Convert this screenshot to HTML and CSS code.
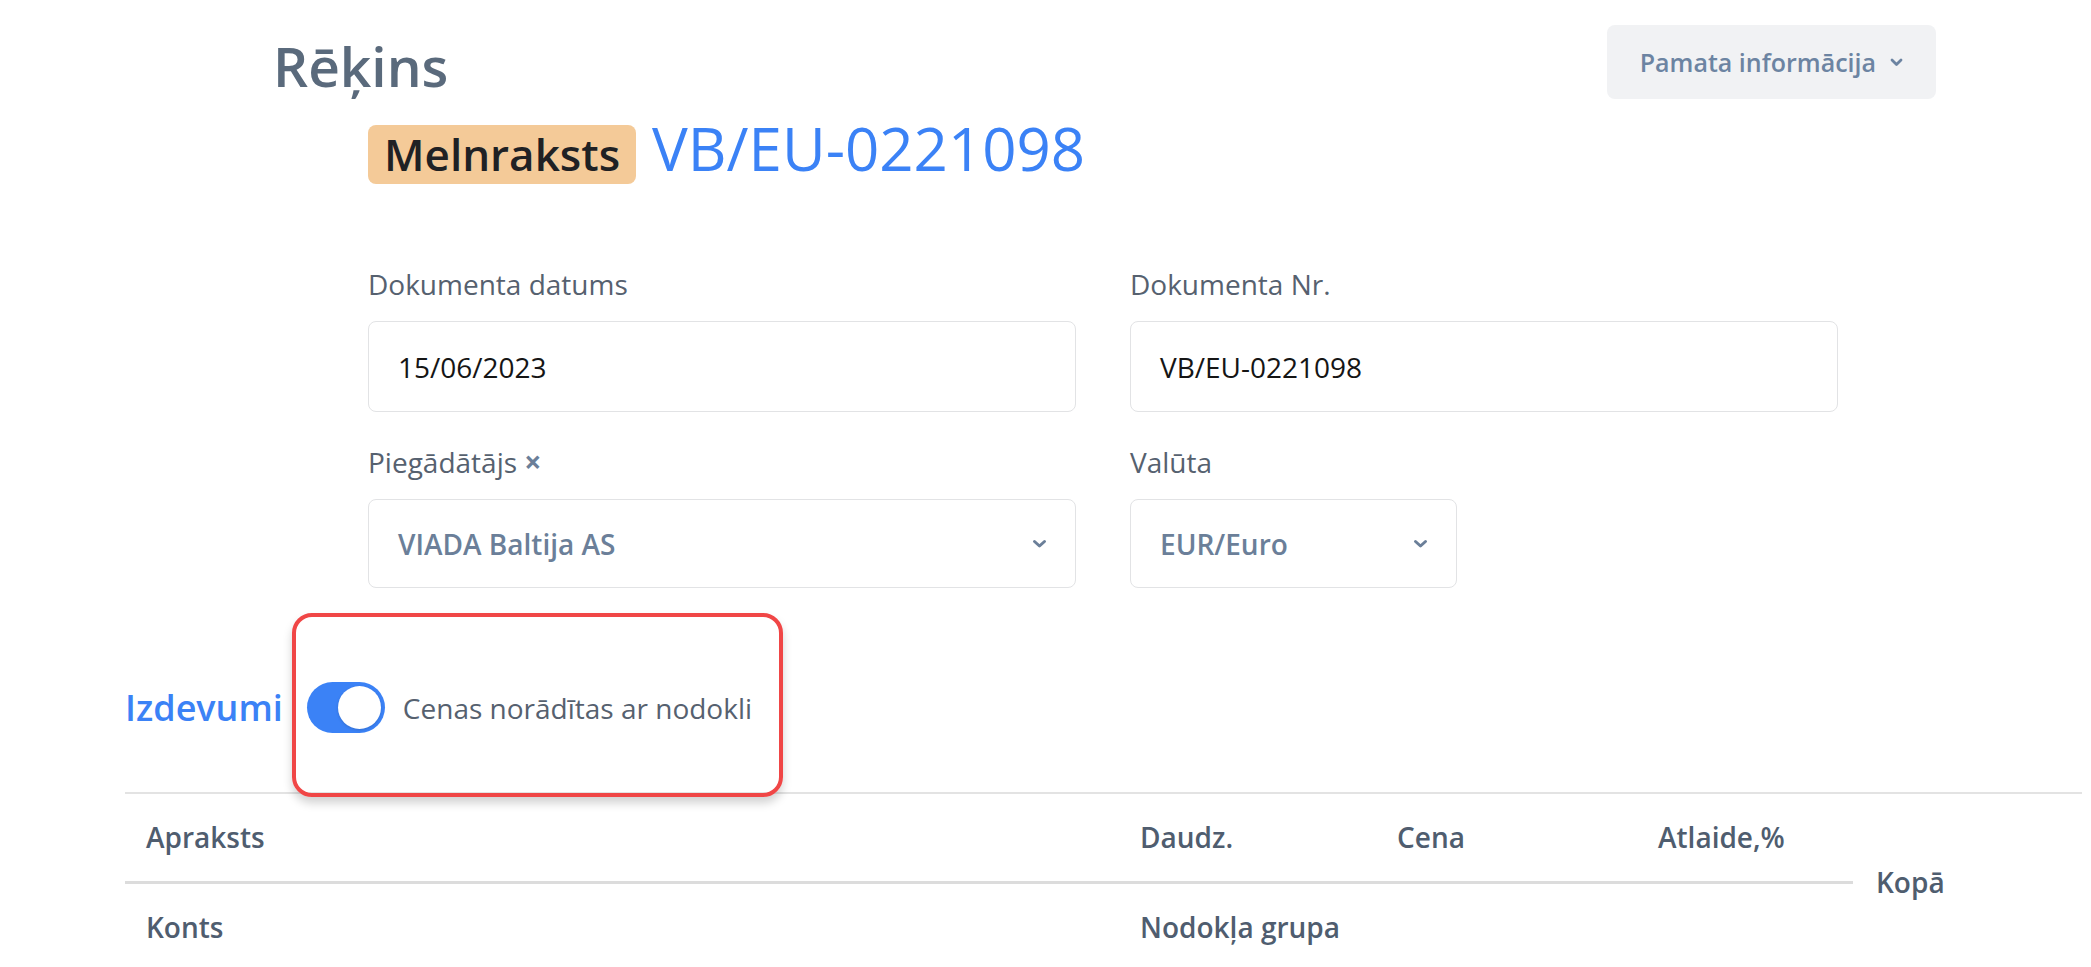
FILE: index.html
```html
<!DOCTYPE html>
<html lang="lv">
<head>
<meta charset="utf-8">
<title>Rēķins</title>
<link rel="stylesheet" href="styles.css">
</head>
<body>
<div class="page">
  <header class="top">
    <h1 class="title">Rēķins</h1>
    <button class="info-btn" type="button">Pamata informācija
      <svg class="chev-sm" width="13" height="9" viewBox="0 0 13 9"><path d="M2 2 L6.5 6.5 L11 2" fill="none" stroke="currentColor" stroke-width="2.8" stroke-linecap="round" stroke-linejoin="round"/></svg>
    </button>
  </header>

  <div class="status-row">
    <span class="badge">Melnraksts</span>
    <span class="doc-no">VB/EU-0221098</span>
  </div>

  <div class="form-grid">
    <div class="field">
      <div class="label">Dokumenta datums</div>
      <div class="input">15/06/2023</div>
    </div>
    <div class="field">
      <div class="label">Dokumenta Nr.</div>
      <div class="input">VB/EU-0221098</div>
    </div>
    <div class="field">
      <div class="label">Piegādātājs <span class="clear">×</span></div>
      <div class="select"><span>VIADA Baltija AS</span>
        <svg class="chev" width="15" height="10" viewBox="0 0 15 10"><path d="M2.5 2.5 L7.5 7 L12.5 2.5" fill="none" stroke="currentColor" stroke-width="3" stroke-linecap="round" stroke-linejoin="round"/></svg>
      </div>
    </div>
    <div class="field">
      <div class="label">Valūta</div>
      <div class="select select-short"><span>EUR/Euro</span>
        <svg class="chev" width="15" height="10" viewBox="0 0 15 10"><path d="M2.5 2.5 L7.5 7 L12.5 2.5" fill="none" stroke="currentColor" stroke-width="3" stroke-linecap="round" stroke-linejoin="round"/></svg>
      </div>
    </div>
  </div>

  <section class="expenses">
    <div class="expenses-head">
      <h2 class="section-title">Izdevumi</h2>
      <div class="tax-toggle">
        <span class="switch"><span class="knob"></span></span>
        <span class="toggle-text">Cenas norādītas ar nodokli</span>
        <span class="highlight"></span>
      </div>
    </div>

    <table class="items">
      <colgroup>
        <col class="c-desc"><col class="c-qty"><col class="c-price"><col class="c-disc"><col class="c-total">
      </colgroup>
      <thead>
        <tr class="row-a">
          <th>Apraksts</th>
          <th>Daudz.</th>
          <th>Cena</th>
          <th>Atlaide,%</th>
          <th rowspan="2" class="total">Kopā</th>
        </tr>
        <tr class="row-b">
          <th>Konts</th>
          <th colspan="3">Nodokļa grupa</th>
        </tr>
      </thead>
    </table>
  </section>
</div>
</body>
</html>
```

FILE: styles.css
```css
html, body {
  margin: 0;
  padding: 0;
  overflow: hidden;
  background: #ffffff;
}

body {
  font-family: "Open Sans", "Noto Sans", sans-serif;
  color: #56616f;
}

.page {
  width: 2091px;
}

/* header */
.top {
  display: flex;
  justify-content: space-between;
  align-items: flex-start;
  padding: 25px 155px 0 273px;
}

.title {
  margin: 7px 0 0;
  font-size: 55px;
  line-height: 68px;
  font-weight: 600;
  color: #5a6a7c;
}

.info-btn {
  display: inline-flex;
  align-items: center;
  gap: 14px;
  height: 74px;
  padding: 0 33px;
  border: none;
  border-radius: 8px;
  background: #f1f2f4;
  font-family: "Open Sans", "Noto Sans", sans-serif;
  font-size: 25px;
  font-weight: 600;
  color: #6c84a2;
}

.chev-sm {
  display: block;
}

/* status */
.status-row {
  display: flex;
  align-items: baseline;
  gap: 16px;
  margin-top: 18px;
  padding-left: 368px;
}

.badge {
  display: inline-block;
  height: 59px;
  padding: 0 16px;
  border-radius: 8px;
  background: #f4ca98;
  font-size: 44px;
  line-height: 59px;
  font-weight: 600;
  color: #1f2124;
}

.doc-no {
  font-size: 60px;
  line-height: 60px;
  font-weight: 500;
  color: #3b82f6;
}

/* form */
.form-grid {
  display: grid;
  grid-template-columns: 708px 708px;
  column-gap: 54px;
  row-gap: 31px;
  margin-top: 81px;
  padding-left: 368px;
}

.label {
  font-size: 28px;
  line-height: 38px;
  margin-bottom: 18px;
  color: #56616f;
}

.clear {
  font-size: 30px;
  font-weight: 700;
  color: #6b7f99;
}

.input {
  box-sizing: border-box;
  height: 91px;
  display: flex;
  align-items: center;
  padding: 0 29px;
  border: 1px solid #e2e3e5;
  border-radius: 8px;
  font-size: 28px;
  color: #151515;
}

.select {
  box-sizing: border-box;
  height: 89px;
  display: flex;
  align-items: center;
  justify-content: space-between;
  padding: 0 28px 0 29px;
  border: 1px solid #e2e3e5;
  border-radius: 8px;
  font-size: 28px;
  font-weight: 600;
  color: #6b7f99;
}

.select-short {
  width: 327px;
}

.chev {
  display: block;
  color: #6b7f99;
}

/* expenses */
.expenses {
  margin-top: 94px;
  padding-left: 125px;
}

.expenses-head {
  display: flex;
  align-items: center;
  gap: 24px;
  height: 51px;
}

.section-title {
  margin: 0;
  font-size: 36px;
  line-height: 51px;
  font-weight: 600;
  color: #3b82f6;
}

.tax-toggle {
  position: relative;
  display: flex;
  align-items: center;
  gap: 18px;
}

.switch {
  position: relative;
  display: block;
  width: 78px;
  height: 51px;
  border-radius: 26px;
  background: #3b82f6;
}

.knob {
  position: absolute;
  top: 4px;
  right: 4px;
  width: 43px;
  height: 43px;
  border-radius: 50%;
  background: #ffffff;
  box-shadow: 0 1px 3px rgba(0, 0, 0, 0.15);
}

.toggle-text {
  font-size: 28px;
  line-height: 38px;
  color: #56616f;
}

.highlight {
  position: absolute;
  left: -15px;
  right: -31px;
  top: -69px;
  bottom: -64px;
  border: 4px solid #f04646;
  border-radius: 20px;
  box-shadow: 0 6px 10px rgba(0, 0, 0, 0.18);
  pointer-events: none;
}

/* table */
.items {
  margin-top: 59px;
  width: 1957px;
  table-layout: fixed;
  border-collapse: separate;
  border-spacing: 0;
}

.c-desc { width: 994px; }
.c-qty { width: 257px; }
.c-price { width: 261px; }
.c-disc { width: 216px; }
.c-total { width: 229px; }

.items th {
  text-align: left;
  font-size: 28px;
  line-height: 36px;
  font-weight: 600;
  color: #4f5d6f;
  padding: 25px 21px 26px;
}

.row-a th {
  border-top: 2px solid #e3e3e3;
  border-bottom: 3px solid #dcdcdc;
}

.row-a th.total {
  border-bottom: none;
  padding-left: 23px;
  vertical-align: middle;
}
```
